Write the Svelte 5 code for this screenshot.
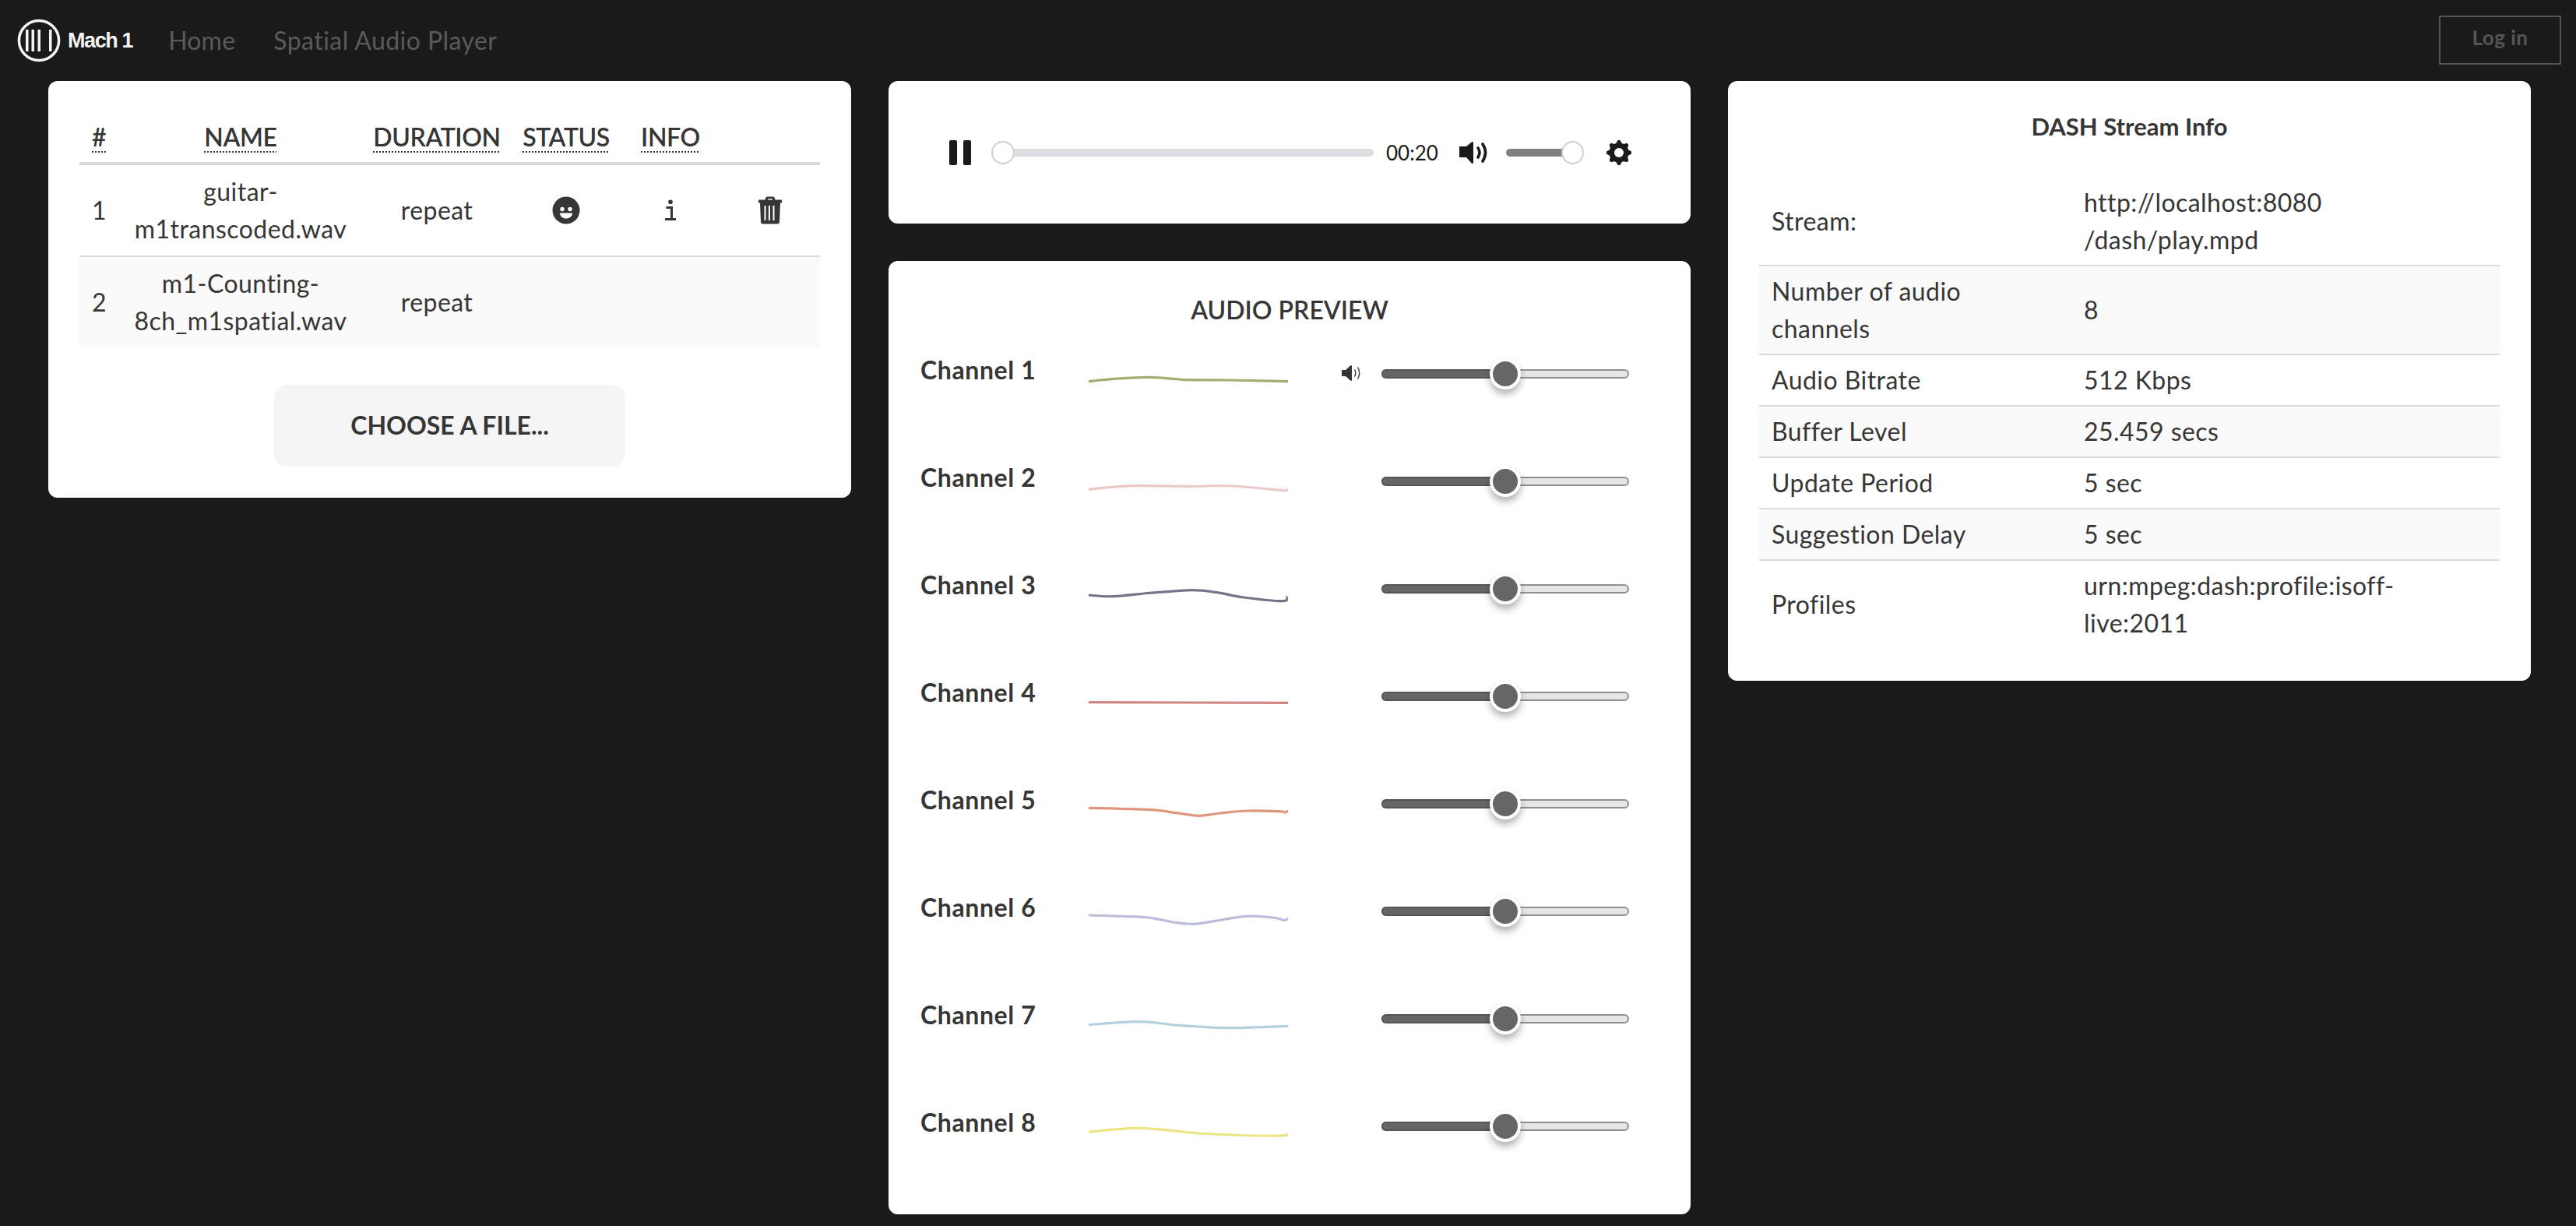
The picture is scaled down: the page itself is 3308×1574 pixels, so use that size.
<script>
  const files = [
    { n: 1, a: 'guitar-', b: 'm1transcoded.wav', icons: true },
    { n: 2, a: 'm1-Counting-', b: '8ch_m1spatial.wav', icons: false }
  ];
  const info = [
    [['Stream:'], ['http://localhost:8080', '/dash/play.mpd']],
    [['Number of audio', 'channels'], ['8']],
    [['Audio Bitrate'], ['512 Kbps']],
    [['Buffer Level'], ['25.459 secs']],
    [['Update Period'], ['5 sec']],
    [['Suggestion Delay'], ['5 sec']],
    [['Profiles'], ['urn:mpeg:dash:profile:isoff-', 'live:2011']]
  ];
  function smooth(p) {
    const pt = (i) => p[Math.max(0, Math.min(p.length - 1, i))];
    let d = `M${p[0][0]} ${p[0][1] + 30}`;
    for (let i = 0; i < p.length - 1; i++) {
      const a = pt(i - 1), b = pt(i), c = pt(i + 1), e = pt(i + 2);
      const c1 = [b[0] + (c[0] - a[0]) / 6, b[1] + (c[1] - a[1]) / 6 + 30];
      const c2 = [c[0] - (e[0] - b[0]) / 6, c[1] - (e[1] - b[1]) / 6 + 30];
      d += `C${c1[0].toFixed(1)} ${c1[1].toFixed(1)} ${c2[0].toFixed(1)} ${c2[1].toFixed(1)} ${c[0]} ${c[1] + 30}`;
    }
    return d;
  }
  const channels = [
    { color: '#a4ad72', pts: [[0,.7],[30,-2.3],[79,-4.7],[127,-1.3],[176,-1],[256,.7]] },
    { color: '#ebc9c9', pts: [[0,1.3],[55,-3.3],[127,-2.7],[186,-3],[251,2.7],[256,.3]] },
    { color: '#74748a', pts: [[0,-1],[32,.7],[82,-4],[132,-7.3],[165,-4.3],[199,2],[249,6.7],[255,.7]] },
    { color: '#d18686', pts: [[0,-1.3],[256,-.7]] },
    { color: '#df967c', pts: [[0,-3.7],[42,-2.7],[82,-1.3],[115,3],[142,6.3],[169,3],[205,0],[245,.7],[252,2],[256,0]] },
    { color: '#bcbcdb', pts: [[0,-4],[42,-2.7],[79,-.7],[109,5],[135,7.3],[162,3.3],[202,-2.7],[239,-.7],[251,2.7],[256,0]] },
    { color: '#b3d0df', pts: [[0,-1.3],[65,-5.3],[115,-.7],[182,2.7],[256,.3]] },
    { color: '#ebe585', pts: [[0,-1.7],[65,-6.7],[142,0],[215,3],[252,2.7],[256,0]] }
  ].map((c, i) => ({ ...c, label: `Channel ${i + 1}`, d: smooth(c.pts) }));
</script>

<div class="page">
  <nav class="nav">
    <svg class="logo" width="58" height="58" viewBox="0 0 58 58" aria-label="Mach 1 logo">
      <circle cx="29" cy="29" r="25.6" fill="none" stroke="#f4f4f4" stroke-width="3.5" />
      <rect x="12" y="15" width="3.5" height="28" fill="#f4f4f4" />
      <rect x="19.5" y="15" width="3.5" height="28" fill="#f4f4f4" />
      <rect x="27.5" y="15" width="3.5" height="28" fill="#f4f4f4" />
      <rect x="42" y="15" width="3.5" height="28" fill="#f4f4f4" />
    </svg>
    <span class="brand">Mach 1</span>
    <a class="link home">Home</a>
    <a class="link">Spatial Audio Player</a>
    <button class="login">Log in</button>
  </nav>

  <main class="columns">
    <section class="card files">
      <table class="ftable">
        <colgroup>
          <col style="width:55px" /><col style="width:304px" /><col style="width:200px" />
          <col style="width:132px" /><col style="width:136px" /><col style="width:124px" />
        </colgroup>
        <thead>
          <tr>
            <th class="left"><abbr>#</abbr></th>
            <th><abbr>NAME</abbr></th>
            <th><abbr>DURATION</abbr></th>
            <th><abbr>STATUS</abbr></th>
            <th><abbr>INFO</abbr></th>
            <th></th>
          </tr>
        </thead>
        <tbody>
          {#each files as f}
            <tr>
              <td class="left">{f.n}</td>
              <td>{f.a}<br />{f.b}</td>
              <td>repeat</td>
              <td>
                {#if f.icons}
                  <svg class="ic" width="36" height="36" viewBox="0 0 36 36">
                    <circle cx="18" cy="18" r="17.5" fill="#363636" />
                    <circle cx="13" cy="16.5" r="2.7" fill="#fff" />
                    <circle cx="23" cy="16.5" r="2.7" fill="#fff" />
                    <path d="M10 21.5h16c0 4.500-4 7-8 7s-8-2.500-8-7z" fill="#fff" />
                  </svg>
                {/if}
              </td>
              <td>
                {#if f.icons}
                  <svg class="ic" width="16" height="28" viewBox="0 0 16 28">
                    <circle cx="8" cy="3.200" r="2.800" fill="#363636" />
                    <path d="M2.500 10.500H9.500V25M1 25.500h14" fill="none" stroke="#363636" stroke-width="3" />
                  </svg>
                {/if}
              </td>
              <td class="trash">
                {#if f.icons}
                  <svg class="ic" width="30" height="36" viewBox="0 0 30 36">
                    <path fill-rule="evenodd" fill="#363636" d="M0 4.500h8.500L9.500 1.500Q10 .5 11.500 .5h7Q20 .5 20.500 1.500L21.500 4.500H30V8.500H28L27 33Q26.800 35.500 24.500 35.500H5.500Q3.200 35.500 3 33L2 8.500H0zM12 4.500h6L17.500 3h-5zM7.500 12h2V31h-2zM12.900 12h2V31h-2zM18.500 12h2V31h-2z" />
                  </svg>
                {/if}
              </td>
            </tr>
          {/each}
        </tbody>
      </table>
      <button class="choose">CHOOSE A FILE...</button>
    </section>

    <div class="mid">
      <section class="card player">
        <svg class="pause" width="28" height="32" viewBox="0 0 28 32">
          <rect x="0" y="0" width="10" height="32" rx="2" fill="#1a1a1a" />
          <rect x="18" y="0" width="10" height="32" rx="2" fill="#1a1a1a" />
        </svg>
        <div class="seek"><span class="pthumb"></span></div>
        <span class="time">00:20</span>
        <svg class="vol" width="36" height="28" viewBox="0 0 36 28">
          <path fill="#1a1a1a" d="M0 6.500Q0 6 .5 6H9L16 .3Q18 -.6 18 1.500V26.500Q18 28.500 16 27.700L9 20H.5Q0 20 0 19.500z" />
          <path d="M24 8Q28 13.500 24 20M30 3Q37 13.500 30 25" fill="none" stroke="#1a1a1a" stroke-width="3.600" stroke-linecap="round" />
        </svg>
        <div class="volume"><span class="vfill"></span><span class="pthumb vthumb"></span></div>
        <svg class="gear" width="32" height="32" viewBox="1 1 16 16">
          <path fill="#1a1a1a" d="M16.135 7.784a2 2 0 01-1.230-2.969c.322-.536.225-.998-.094-1.316l-.31-.31c-.318-.318-.78-.415-1.316-.094a2 2 0 01-2.969-1.230C10.065 1.258 9.669 1 9.219 1h-.438c-.45 0-.845.258-.997.865a2 2 0 01-2.969 1.230c-.536-.322-.999-.225-1.317.093l-.31.31c-.318.318-.415.781-.093 1.317a2 2 0 01-1.230 2.969C1.260 7.935 1 8.330 1 8.781v.438c0 .45.258.845.865.997a2 2 0 011.230 2.969c-.322.536-.225.998.094 1.316l.31.31c.319.319.782.415 1.316.094a2 2 0 012.969 1.230c.151.607.547.865.997.865h.438c.45 0 .845-.258.997-.865a2 2 0 012.969-1.230c.535.321.997.225 1.316-.094l.31-.31c.318-.318.415-.781.094-1.316a2 2 0 011.230-2.969c.607-.151.865-.547.865-.997v-.438c0-.451-.260-.846-.865-.997zM9 12a3 3 0 110-6 3 3 0 010 6z" />
        </svg>
      </section>

      <section class="card preview">
        <h2 class="ptitle">AUDIO PREVIEW</h2>
        {#each channels as c, i}
          <div class="chan">
            <span class="clabel">{c.label}</span>
            <svg class="wave" width="256" height="60" viewBox="0 0 256 60">
              <path d={c.d} fill="none" stroke={c.color} stroke-width="3.200" />
            </svg>
            <span class="spk">
              {#if i === 0}
                <svg width="24" height="20" viewBox="0 0 24 20">
                  <path fill="#363636" d="M0 6.500Q0 6 .5 6H5L11 .5Q13 -.5 13 1V19Q13 20.500 11 19.500L5 14H.5Q0 14 0 13.500z" />
                  <path d="M16.500 5.500Q19 10 16.500 14.500M20.500 2.500Q25 10 20.500 17.500" fill="none" stroke="#363636" stroke-width="1.400" />
                </svg>
              {/if}
            </span>
            <div class="slider">
              <span class="sfill"></span>
              <span class="sthumb"></span>
            </div>
          </div>
        {/each}
      </section>
    </div>

    <section class="card stream">
      <h2 class="stitle">DASH Stream Info</h2>
      <table class="itable">
        <colgroup><col style="width:401px" /><col style="width:550px" /></colgroup>
        <tbody>
          {#each info as row}
            <tr>
              {#each row as cell}
                <td>
                  {#each cell as line, j}{#if j > 0}<br />{/if}{line}{/each}
                </td>
              {/each}
            </tr>
          {/each}
        </tbody>
      </table>
    </section>
  </main>
</div>

<style>
  :global(body) {
    margin: 0;
    background: #1a1a1a;
  }
  .page {
    min-height: 1574px;
    background: #1a1a1a;
    font-family: Lato, "Noto Sans", sans-serif;
    font-size: 32px;
    line-height: 48px;
    letter-spacing: 0.45px;
    color: #363636;
  }
  .nav {
    height: 104px;
    display: flex;
    align-items: center;
    padding: 0 19px 0 21px;
  }
  .logo {
    flex: none;
  }
  .brand {
    margin-left: 8px;
    font-family: "Liberation Sans", Arial, sans-serif;
    font-weight: 700;
    font-size: 27px;
    letter-spacing: -1.4px;
    color: #f4f4f4;
  }
  .link {
    margin-left: 49px;
    color: #5a5a5a;
  }
  .home {
    margin-left: 46px;
    letter-spacing: 0.2px;
  }
  .login {
    margin-left: auto;
    width: 157px;
    height: 63px;
    position: relative;
    top: -1px;
    background: none;
    border: 2px solid #555;
    color: #555;
    font-family: inherit;
    font-size: 26px;
    font-weight: 700;
    letter-spacing: 0.5px;
    padding: 0 0 6px;
  }
  .columns {
    display: grid;
    grid-template-columns: 1031px 1030px 1031px;
    gap: 48px;
    padding-left: 62px;
    align-items: start;
  }
  .card {
    background: #fff;
    border-radius: 12px;
  }
  .files {
    padding: 40px;
    box-sizing: border-box;
    height: 535px;
    display: flex;
    flex-direction: column;
  }
  table {
    border-collapse: collapse;
    table-layout: fixed;
    width: 951px;
  }
  .ftable th {
    padding: 8px 0;
    border-bottom: 4px solid #dbdbdb;
    font-weight: 600;
    letter-spacing: -0.4px;
    text-align: center;
  }
  abbr {
    text-decoration: underline dotted #363636 2px;
    text-underline-offset: 6px;
  }
  .ftable td {
    padding: 10px 0;
    text-align: center;
    vertical-align: middle;
  }
  .ftable .left {
    text-align: left;
    padding-left: 16px;
  }
  .ftable .trash {
    padding-right: 4px;
  }
  .ftable tbody tr:first-child td {
    border-bottom: 2px solid #dbdbdb;
  }
  .ftable tbody tr:nth-child(2) {
    background: #fafafa;
  }
  .ic {
    display: block;
    margin: 0 auto;
  }
  .choose {
    margin: 48px auto 0;
    width: 451px;
    height: 105px;
    border: none;
    border-radius: 16px;
    background: #f5f5f5;
    color: #363636;
    font-family: inherit;
    font-size: 32px;
    font-weight: 700;
    letter-spacing: 0;
    padding: 0 0 2px;
  }
  .mid {
    display: flex;
    flex-direction: column;
    gap: 48px;
  }
  .player {
    height: 183px;
    display: flex;
    align-items: center;
    padding-left: 78px;
  }
  .pause,
  .vol,
  .gear {
    flex: none;
  }
  .seek {
    margin-left: 26px;
    width: 491px;
    height: 10px;
    border-radius: 5px;
    background: #dbdee3;
    position: relative;
  }
  .pthumb {
    position: absolute;
    left: 0;
    top: -10px;
    width: 30px;
    height: 30px;
    box-sizing: border-box;
    border-radius: 50%;
    background: #fff;
    border: 2px solid #cfcfcf;
  }
  .time {
    margin-left: 16px;
    width: 65px;
    font-size: 26px;
    letter-spacing: 0;
    color: #1a1a1a;
  }
  .vol {
    margin-left: 29px;
  }
  .volume {
    margin-left: 24px;
    width: 99px;
    height: 10px;
    position: relative;
  }
  .vfill {
    display: block;
    height: 10px;
    width: 80px;
    border-radius: 5px;
    background: #808080;
  }
  .vthumb {
    left: 71px;
    width: 29px;
  }
  .gear {
    margin-left: 30px;
  }
  .preview {
    height: 1224px;
    box-sizing: border-box;
    padding: 40px 0 0 41px;
  }
  .ptitle {
    margin: 0 41px 0 0;
    text-align: center;
    font-size: 32px;
    line-height: 46px;
    font-weight: 600;
    letter-spacing: 0;
    color: #363636;
  }
  .chan {
    height: 138px;
    display: grid;
    grid-template-columns: 216px 256px 69px 24px 27px 318px;
    grid-template-areas: "label wave . spk . slider";
    align-items: start;
  }
  .clabel {
    grid-area: label;
    margin-top: 30px;
    font-weight: 700;
    letter-spacing: 0.6px;
  }
  .wave {
    grid-area: wave;
    margin-top: 38px;
    display: block;
  }
  .spk {
    grid-area: spk;
    margin-top: 48px;
    height: 20px;
    line-height: 0;
  }
  .slider {
    grid-area: slider;
    margin-top: 53px;
    height: 12px;
    box-sizing: border-box;
    border: 2px solid #909090;
    border-radius: 6px;
    background: #e6e6e6;
    position: relative;
  }
  .sfill {
    position: absolute;
    left: -2px;
    top: -2px;
    width: 159px;
    height: 12px;
    box-sizing: border-box;
    border-radius: 6px 0 0 6px;
    background: #666;
    border: 2px solid #555;
    border-right: none;
  }
  .sthumb {
    position: absolute;
    left: 137px;
    top: -16px;
    width: 40px;
    height: 40px;
    box-sizing: border-box;
    border-radius: 50%;
    background: #666;
    border: 4px solid #fff;
    box-shadow: 0 6px 10px rgba(0, 0, 0, 0.3);
  }
  .stream {
    padding: 40px;
    box-sizing: border-box;
    height: 770px;
  }
  .stitle {
    margin: 0 0 48px;
    text-align: center;
    font-size: 31px;
    line-height: 36px;
    font-weight: 700;
    letter-spacing: 0;
    color: #363636;
  }
  .itable td {
    padding: 8px 16px;
    vertical-align: middle;
    border-bottom: 2px solid #dbdbdb;
  }
  .itable tr:last-child td {
    border-bottom: none;
  }
  .itable tr:nth-child(even) {
    background: #fafafa;
  }
</style>
